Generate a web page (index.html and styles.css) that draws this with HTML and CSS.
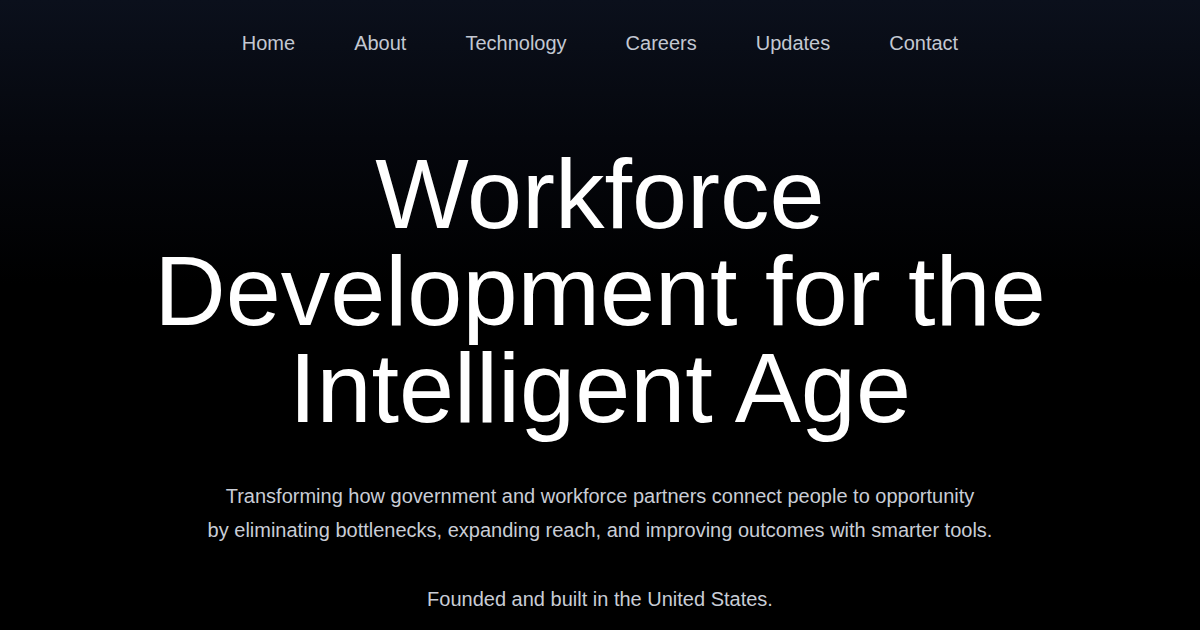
FILE: index.html
```html
<!DOCTYPE html>
<html lang="en">
<head>
<meta charset="utf-8">
<title>Workforce Development for the Intelligent Age</title>
<link rel="stylesheet" href="styles.css">
</head>
<body>
<div class="page">
  <nav class="nav">
    <a href="#">Home</a>
    <a href="#">About</a>
    <a href="#">Technology</a>
    <a href="#">Careers</a>
    <a href="#">Updates</a>
    <a href="#">Contact</a>
  </nav>
  <main class="hero">
    <h1 class="title">Workforce<br>Development for the<br>Intelligent Age</h1>
    <p class="lead">Transforming how government and workforce partners connect people to opportunity<br>by eliminating bottlenecks, expanding reach, and improving outcomes with smarter tools.</p>
    <p class="note">Founded and built in the United States.</p>
  </main>
</div>
</body>
</html>
```
FILE: styles.css
```css
html, body {
  margin: 0;
  padding: 0;
  background: #000;
}
.page {
  width: 1200px;
  height: 630px;
  overflow: hidden;
  background: linear-gradient(180deg, #0b101c 0%, #05070d 22%, #000 45%, #000 100%);
  font-family: "Liberation Sans", Arial, sans-serif;
  color: #fff;
}
.nav {
  display: flex;
  justify-content: center;
  gap: 59px;
  padding-top: 31px;
  height: 24px;
}
.nav a {
  color: #c3c8d2;
  text-decoration: none;
  font-size: 20px;
  line-height: 24px;
}
.hero {
  display: flex;
  flex-direction: column;
  align-items: center;
  text-align: center;
  padding-top: 90px;
}
.title {
  margin: 0;
  font-weight: 400;
  font-size: 99px;
  line-height: 97px;
  letter-spacing: 0;
  color: #fff;
}
.lead {
  margin: 43px 0 0;
  font-size: 20px;
  line-height: 34px;
  color: #c9cdd6;
}
.note {
  margin: 35px 0 0;
  font-size: 20px;
  line-height: 34px;
  color: #c9cdd6;
}
```
